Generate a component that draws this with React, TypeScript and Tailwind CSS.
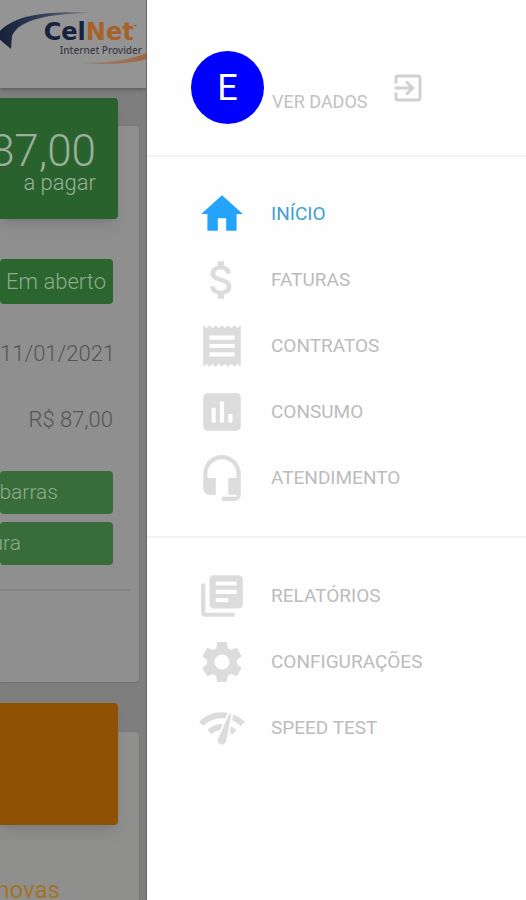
import type { IconType } from "react-icons";
import {
  MdAssessment,
  MdAttachMoney,
  MdExitToApp,
  MdHeadsetMic,
  MdHome,
  MdLibraryBooks,
  MdNetworkCheck,
  MdReceipt,
  MdSettings,
} from "react-icons/md";

interface MenuEntry {
  label: string;
  icon: IconType;
  active?: boolean;
}

const mainMenu: MenuEntry[] = [
  { label: "INÍCIO", icon: MdHome, active: true },
  { label: "FATURAS", icon: MdAttachMoney },
  { label: "CONTRATOS", icon: MdReceipt },
  { label: "CONSUMO", icon: MdAssessment },
  { label: "ATENDIMENTO", icon: MdHeadsetMic },
];

const extraMenu: MenuEntry[] = [
  { label: "RELATÓRIOS", icon: MdLibraryBooks },
  { label: "CONFIGURAÇÕES", icon: MdSettings },
  { label: "SPEED TEST", icon: MdNetworkCheck },
];

function MenuItem({ label, icon: Icon, active = false }: MenuEntry) {
  return (
    <li>
      <a
        href="#"
        aria-current={active ? "page" : undefined}
        className={`flex h-[66px] items-center gap-6 pl-[50px] text-[19px] ${
          active ? "text-[#3fa0d0]" : "text-[#bcbcbc]"
        }`}
      >
        <Icon
          size={50}
          className={active ? "text-[#24a3fa]" : "text-[#dcdcdc]"}
        />
        <span>{label}</span>
      </a>
    </li>
  );
}

function Logo() {
  return (
    <div className="relative h-[88px] shrink-0 bg-[#949494] shadow-[0_1px_5px_rgba(0,0,0,0.35)]">
      <svg
        viewBox="0 0 147 88"
        className="absolute top-0 right-0 h-[88px] w-[147px]"
        aria-hidden="true"
      >
        <defs>
          <linearGradient id="navy" x1="0" x2="1">
            <stop offset="0" stopColor="#141f3a" />
            <stop offset="0.5" stopColor="#39435c" />
            <stop offset="1" stopColor="#8c8d92" />
          </linearGradient>
          <linearGradient id="copper" x1="0" x2="1">
            <stop offset="0" stopColor="#93877d" />
            <stop offset="1" stopColor="#a2663f" />
          </linearGradient>
        </defs>
        <path
          d="M0 32C14 17 40 10 98 13C52 13 20 19 13 36L12 49L0 39Z"
          fill="url(#navy)"
        />
        <path d="M82 63C108 63 132 60 147 53V59C132 64 110 65 82 63Z" fill="url(#copper)" />
      </svg>
      <div className="relative flex flex-col items-end pt-5">
        <p className="pr-[9px] font-['DejaVu_Sans'] text-2xl leading-6 font-bold whitespace-nowrap text-[#17223e]">
          Cel<span className="text-[#a5622a]">Net</span>
          <span className="align-top text-[8px] leading-3 text-[#a5622a]">-</span>
        </p>
        <p className="pr-1 font-['Noto_Sans'] text-[10px] leading-3 font-medium whitespace-nowrap text-[#3c3c46]">
          Internet Provider
        </p>
      </div>
    </div>
  );
}

function Dashboard() {
  return (
    <main className="flex w-[147px] shrink-0 flex-col overflow-hidden border-r border-[#666] bg-[#7e7e7e] text-[22px] font-light text-[#555]">
      <Logo />

      <section className="mt-[38px] mr-[7px] flex h-[556px] flex-col rounded-r bg-[#8f8f8f] shadow">
        <div className="-mt-7 mr-[21px] flex h-[121px] shrink-0 flex-col items-end rounded-r bg-[#2a622d] pt-[31px] pr-[22px] text-[#9ab09b] shadow-lg">
          <p className="text-[44px] leading-[44px]">87,00</p>
          <p className="leading-5">a pagar</p>
        </div>
        <div className="mt-10 mr-[26px] flex h-[45px] shrink-0 items-center justify-end rounded bg-[#2a662d] pr-[7px] whitespace-nowrap text-[#8fab90]">
          Em aberto
        </div>
        <p className="mt-[34px] pr-[27px] text-right leading-8">11/01/2021</p>
        <p className="mt-[34px] pr-[26px] text-right leading-8">R$ 87,00</p>
        <div className="mt-[35px] mr-[26px] flex flex-col gap-2 text-[21px] text-[#8fab90]">
          <button className="flex h-[43px] items-center justify-end rounded bg-[#386c3a] pr-[55px]">
            barras
          </button>
          <button className="flex h-[43px] items-center justify-end rounded bg-[#386c3a] pr-[92px]">
            ura
          </button>
        </div>
        <hr className="mt-6 mr-2 border-t-2 border-[#858585]" />
      </section>

      <section className="mt-[50px] mr-[7px] flex flex-1 flex-col rounded-tr bg-[#8f908e] shadow">
        <div className="-mt-[29px] mr-[21px] h-[122px] shrink-0 rounded-r bg-[#8f5205] shadow-lg" />
        <p className="mt-[49px] flex h-[26px] justify-end pr-[79px] text-2xl leading-8 font-normal text-[#a07428]">
          novas
        </p>
      </section>
    </main>
  );
}

function Drawer() {
  return (
    <aside className="min-w-0 flex-1 bg-[#fefefe]">
      <header className="flex h-[157px] items-center border-b-2 border-[#f3f3f3] pt-5 pl-11">
        <div className="mb-0 flex size-[73px] items-center justify-center rounded-full bg-[#0000fe] text-4xl text-white">
          E
        </div>
        <a href="#" className="ml-2 pt-7 text-lg whitespace-nowrap text-[#c2c2c2]">
          VER DADOS
        </a>
        <button aria-label="Sair" className="ml-[22px] text-[#d0d0d0]">
          <MdExitToApp size={36} />
        </button>
      </header>
      <nav>
        <ul className="border-b-2 border-[#f3f3f3] pt-6 pb-[25px]">
          {mainMenu.map((entry) => (
            <MenuItem key={entry.label} {...entry} />
          ))}
        </ul>
        <ul className="pt-[25px]">
          {extraMenu.map((entry) => (
            <MenuItem key={entry.label} {...entry} />
          ))}
        </ul>
      </nav>
    </aside>
  );
}

export default function App() {
  return (
    <div className="flex min-h-screen font-[Roboto,sans-serif]">
      <Dashboard />
      <Drawer />
    </div>
  );
}
